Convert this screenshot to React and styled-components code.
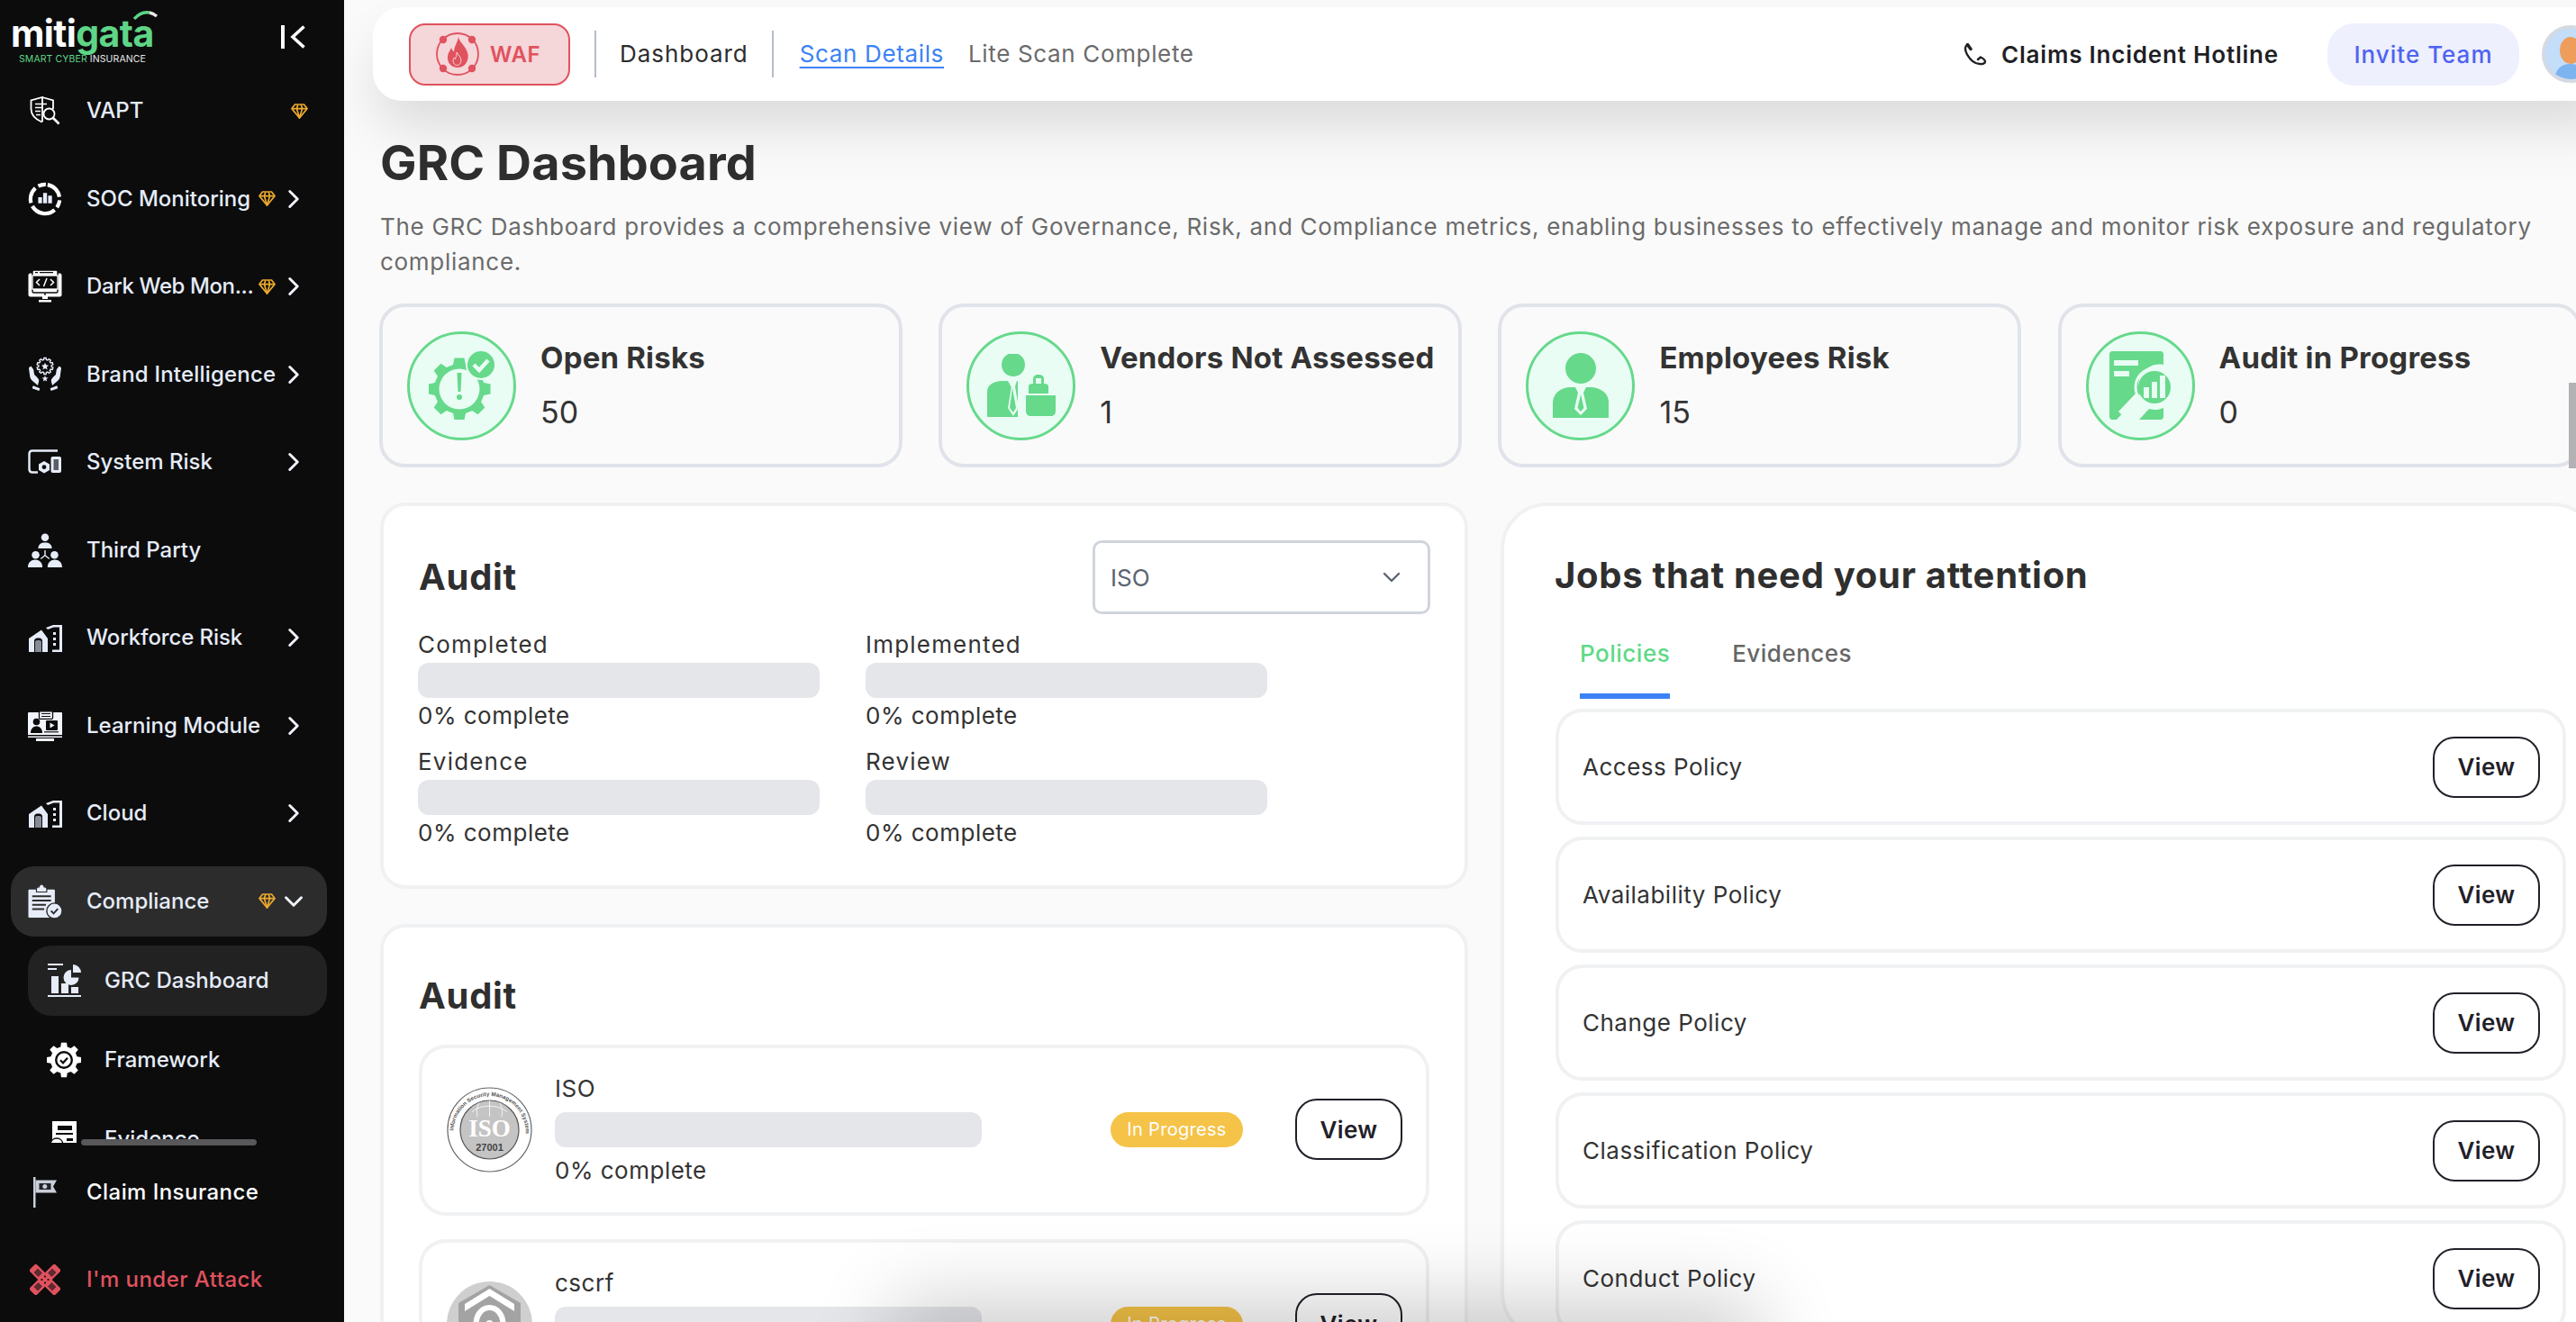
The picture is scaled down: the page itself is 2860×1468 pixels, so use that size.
import React from "react";
import styled, { createGlobalStyle } from "styled-components";
import { ChevronRight, ChevronDown } from "lucide-react";

const FF = `Inter, "Noto Sans", "Liberation Sans", sans-serif`;

const Global = createGlobalStyle`
  html, body { margin: 0; padding: 0; background: #fafafa; }
  body { font-family: ${FF}; overflow: hidden; }
  * { box-sizing: border-box; }
`;

const Shell = styled.div`
  display: flex;
  width: 2860px;
  height: 1468px;
  overflow: hidden;
  background: #fafafa;
`;

/* ---------- sidebar ---------- */
const Side = styled.aside`
  position: relative;
  width: 382px;
  flex: none;
  height: 100%;
  background: #0c0c0d;
  display: flex;
  flex-direction: column;
`;
const SideHead = styled.div`
  height: 84px;
  flex: none;
  display: flex;
  justify-content: space-between;
  align-items: flex-start;
  padding: 17px 43px 0 12px;
`;
const LogoBox = styled.div`
  position: relative;
  display: flex;
  flex-direction: column;
  width: 162px;
`;
const LogoWord = styled.div`
  font-size: 41px;
  line-height: 40px;
  font-weight: 700;
  letter-spacing: -0.6px;
  color: #fff;
  white-space: nowrap;
`;
const LogoGreen = styled.span`
  color: #5fd587;
`;
const LogoSub = styled.div`
  margin: 3px 0 0 9px;
  font-size: 10.5px;
  line-height: 12px;
  letter-spacing: 0.1px;
  color: #e8e8e8;
  white-space: nowrap;
`;
const LogoArc = styled.svg`
  position: absolute;
  left: 134px;
  top: -6px;
`;
const CollapseIcon = styled.svg`
  margin-top: 11px;
`;
const NavClip = styled.nav`
  height: 1185px;
  flex: none;
  overflow: hidden;
  display: flex;
  flex-direction: column;
  gap: 19.5px;
  padding: 0 19px 0 12px;
`;
const NavRow = styled.div`
  flex: none;
  height: 78px;
  display: flex;
  align-items: center;
  padding: 0 20px 0 19px;
  border-radius: 26px;
  background: ${(p) => (p.$open ? "#2c2c2d" : "transparent")};
`;
const SubList = styled.div`
  flex: none;
  display: flex;
  flex-direction: column;
  gap: 10px;
  margin: -9.5px 0 0 19px;
`;
const SubRow = styled.div`
  flex: none;
  height: 78px;
  display: flex;
  align-items: center;
  padding-left: 21px;
  border-radius: 26px;
  background: ${(p) => (p.$active ? "#222223" : "transparent")};
`;
const IconSlot = styled.span`
  flex: none;
  width: 38px;
  height: 40px;
  margin-right: ${(p) => p.$gap ?? 27}px;
  display: flex;
  align-items: center;
  justify-content: center;
`;
const NavLabel = styled.span`
  font-size: 24px;
  line-height: 36px;
  font-weight: 500;
  letter-spacing: ${(p) => p.$spacing ?? 0}px;
  white-space: nowrap;
  color: ${(p) => p.$color || "#e6ecf8"};
`;
const Trail = styled.span`
  margin-left: auto;
  display: flex;
  align-items: center;
  gap: ${(p) => p.$gap ?? 3}px;
  margin-right: ${(p) => p.$shift ?? 0}px;
  color: #f0f3fa;
`;
const BottomNav = styled.div`
  flex: none;
  display: flex;
  flex-direction: column;
  gap: 19px;
  padding: 16px 19px 0 12px;
`;
const Thumb = styled.div`
  position: absolute;
  left: 90px;
  top: 1265px;
  width: 195px;
  height: 7px;
  border-radius: 4px;
  background: #58585a;
`;

/* ---------- main ---------- */
const Main = styled.main`
  position: relative;
  flex: 1;
  min-width: 0;
  height: 100%;
  overflow: hidden;
`;
const Topbar = styled.header`
  position: relative;
  z-index: 1;
  height: 104px;
  margin: 8px -40px 0 32px;
  padding: 0 14px 0 40px;
  display: flex;
  align-items: center;
  background: #fff;
  border-radius: 32px 0 0 32px;
  box-shadow: 0 34px 60px -6px rgba(0, 0, 0, 0.13);
`;
const WafButton = styled.div`
  flex: none;
  width: 179px;
  height: 69px;
  display: flex;
  align-items: center;
  gap: 9px;
  padding-left: 25px;
  background: #f5d6d9;
  border: 2px solid #e0525e;
  border-radius: 18px;
  color: #e0525e;
  font-size: 24px;
  font-weight: 600;
  letter-spacing: 0.6px;
`;
const TopSep = styled.span`
  flex: none;
  width: 2px;
  height: 52px;
  background: #b6bcc8;
  margin: ${(p) => p.$m};
`;
const Crumb = styled.span`
  font-size: 26px;
  line-height: 36px;
  letter-spacing: ${(p) => p.$spacing ?? 0.65}px;
  white-space: nowrap;
  color: ${(p) => p.$color};
  text-decoration: ${(p) => (p.$link ? "underline" : "none")};
  text-underline-offset: 5px;
  margin-left: ${(p) => p.$ml || 0}px;
`;
const Hotline = styled.div`
  margin-left: auto;
  display: flex;
  align-items: center;
  gap: 16px;
  font-size: 26px;
  font-weight: 600;
  letter-spacing: 0.8px;
  color: #1f1f26;
  white-space: nowrap;
`;
const Invite = styled.div`
  flex: none;
  width: 213px;
  height: 69px;
  margin: 0 25px 0 54px;
  display: flex;
  align-items: center;
  justify-content: center;
  background: #eef0fd;
  border-radius: 30px;
  color: #4f63f0;
  font-size: 26px;
  font-weight: 500;
  letter-spacing: 1px;
`;
const Avatar = styled.div`
  flex: none;
  width: 64px;
  height: 64px;
  border-radius: 50%;
  border: 4px solid #d5dae2;
  background: #b8d6f7;
  overflow: hidden;
`;
const Content = styled.div`
  padding: 39px 0 0 40px;
`;
const PageTitle = styled.h1`
  margin: 0;
  font-size: 54px;
  line-height: 60px;
  font-weight: 700;
  letter-spacing: 0.1px;
  color: #2f2f2f;
`;
const PageDesc = styled.p`
  margin: 21px 0 0;
  width: 2410px;
  font-size: 26px;
  line-height: 39px;
  letter-spacing: 0.71px;
  color: #6b6b6b;
`;
const StatGrid = styled.div`
  display: grid;
  grid-template-columns: repeat(4, 581px);
  gap: 40.2px;
  margin: 27px 0 0 -1px;
`;
const StatCard = styled.div`
  height: 182px;
  display: flex;
  align-items: center;
  gap: 27px;
  padding: 0 27px;
  border: 4px solid #e0e3e9;
  border-radius: 28px;
  background: #fafafa;
`;
const StatCircle = styled.span`
  flex: none;
  width: 121px;
  height: 121px;
  border-radius: 50%;
  border: 3px solid #66d98b;
  background: #e9fdf4;
  display: flex;
  align-items: center;
  justify-content: center;
`;
const StatText = styled.div`
  display: flex;
  flex-direction: column;
  gap: 17px;
  padding-bottom: 2px;
`;
const StatTitle = styled.div`
  font-size: 33px;
  line-height: 44px;
  font-weight: 700;
  letter-spacing: 0.2px;
  color: #333;
  white-space: nowrap;
`;
const StatValue = styled.div`
  font-size: 34px;
  line-height: 44px;
  color: #333;
`;
const Columns = styled.div`
  display: grid;
  grid-template-columns: 1208px 1220px;
  gap: 36px;
  margin-top: 39px;
  align-items: start;
`;
const LeftCol = styled.div`
  display: flex;
  flex-direction: column;
  gap: 39px;
`;
const Panel = styled.section`
  border: 4px solid #f0f1f3;
  border-radius: ${(p) => p.$radius || 28}px;
  background: #fff;
  padding: ${(p) => p.$pad};
`;
const PanelHead = styled.div`
  display: flex;
  justify-content: space-between;
  align-items: center;
  height: 82px;
`;
const PanelTitle = styled.h2`
  margin: ${(p) => p.$m || "0"};
  font-size: 40px;
  line-height: 74px;
  font-weight: 700;
  letter-spacing: 0.7px;
  color: #2f2f2f;
  white-space: nowrap;
`;
const SelectBox = styled.div`
  width: 375px;
  height: 82px;
  display: flex;
  align-items: center;
  justify-content: space-between;
  padding: 0 24px 0 17px;
  border: 3px solid #d0d5dc;
  border-radius: 10px;
  font-size: 26px;
  color: #5b6472;
`;
const ProgressGrid = styled.div`
  display: grid;
  grid-template-columns: repeat(2, 446px);
  gap: 15px 51px;
  margin-top: 16px;
`;
const ProgressCell = styled.div`
  display: flex;
  flex-direction: column;
  gap: 2px;
`;
const BodyText = styled.div`
  font-size: 26px;
  line-height: 36px;
  letter-spacing: 0.5px;
  color: #333;
  white-space: nowrap;
`;
const ProgressLabel = styled(BodyText)`
  letter-spacing: 1.2px;
`;
const Bar = styled.div`
  height: 39px;
  border-radius: 12px;
  background: #e5e6ea;
`;
const AuditList = styled.div`
  display: flex;
  flex-direction: column;
  gap: 26px;
  margin-top: 17px;
`;
const AuditRow = styled.div`
  height: 190px;
  flex: none;
  display: flex;
  align-items: center;
  padding: 0 26px 2px 27px;
  border: 4px solid #f0f1f3;
  border-radius: 30px;
`;
const AuditLogo = styled.svg`
  flex: none;
  margin-right: 25px;
`;
const AuditBody = styled.div`
  width: 474px;
  display: flex;
  flex-direction: column;
  gap: 8px;
`;
const Badge = styled.span`
  flex: none;
  width: 147px;
  height: 39px;
  margin: 0 58px 0 auto;
  display: flex;
  align-items: center;
  justify-content: center;
  border-radius: 20px;
  background: #f5c347;
  color: #fff;
  font-size: 20px;
  letter-spacing: 0.3px;
`;
const ViewBtn = styled.button`
  flex: none;
  width: 119px;
  height: 68px;
  padding: 0;
  border: 2.5px solid #1f2028;
  border-radius: 24px;
  background: #fff;
  color: #1f2028;
  font-family: ${FF};
  font-size: 26px;
  font-weight: 600;
  letter-spacing: 0.4px;
`;
const Tabs = styled.div`
  display: flex;
  gap: 69px;
  margin: 32px 0 0 27px;
`;
const Tab = styled.div`
  padding-bottom: 26px;
  border-bottom: 6px solid ${(p) => (p.$active ? "#3b82f6" : "transparent")};
  font-size: 26px;
  line-height: 36px;
  font-weight: 500;
  letter-spacing: 0.5px;
  color: ${(p) => (p.$active ? "#5fd987" : "#666")};
`;
const PolicyList = styled.div`
  display: flex;
  flex-direction: column;
  gap: 13px;
  margin-top: 11px;
  width: 1122px;
`;
const PolicyRow = styled.div`
  height: 129px;
  flex: none;
  display: flex;
  align-items: center;
  justify-content: space-between;
  padding: 0 25px 0 26px;
  border: 4px solid #f0f1f3;
  border-radius: 30px;
`;
const PageThumb = styled.div`
  position: absolute;
  right: 0;
  top: 425px;
  width: 8px;
  height: 95px;
  background: #b3b1b4;
  z-index: 2;
`;
const BottomGlow = styled.div`
  position: absolute;
  left: 640px;
  top: 1476px;
  width: 900px;
  height: 60px;
  z-index: 3;
  box-shadow: 0 0 90px 30px rgba(0, 0, 0, 0.2);
`;

/* ---------- drawings ---------- */
const gear = (cx, cy, ro, ri, n) => {
  const pts = [];
  const step = (Math.PI * 2) / n;
  for (let i = 0; i < n; i++) {
    const a = i * step;
    const w = step * 0.2;
    const g = step * 0.32;
    [
      [ri, a - g],
      [ro, a - w],
      [ro, a + w],
      [ri, a + g],
    ].forEach(([r, t]) =>
      pts.push(`${(cx + r * Math.sin(t)).toFixed(2)} ${(cy - r * Math.cos(t)).toFixed(2)}`)
    );
  }
  return `M${pts.join("L")}Z`;
};

const Gem = () => (
  <svg width="19" height="17" viewBox="0 0 19 17" fill="none" stroke="#eba92f" strokeWidth="1.7" strokeLinejoin="round">
    <path d="M4.5 1h10L18 5.6 9.5 16 1 5.6z" />
    <path d="M1 5.6h17M6.4 5.6 9.5 16l3.1-10.4M6.4 5.6l1.4-4.4M12.6 5.6l-1.4-4.4" />
  </svg>
);

const IconVapt = () => (
  <svg width="34" height="32" viewBox="0 0 34 32" fill="none" stroke="#fff" strokeWidth="1.8">
    <path d="M14 1 26 4.5V14M14 27.5l-1 .7C6 25 1.5 20.5 1.5 14V4.5L14 1z" />
    <path d="M6 8.5h13M6 12.5h9M6 16.5h6M7 20.5h5" strokeWidth="1.6" />
    <circle cx="21.5" cy="19.5" r="6" />
    <path d="M26 24l6.5 6.5" strokeWidth="2.6" />
  </svg>
);
const IconSoc = () => (
  <svg width="40" height="40" viewBox="0 0 40 40" fill="none">
    <circle cx="20" cy="20" r="17" stroke="#fff" strokeWidth="4.4" strokeDasharray="21 4 9 4 30 4 19 4 9 4" strokeLinecap="butt" transform="rotate(-80 20 20)" />
    <path d="M12 18h4.5v7H12zM17.8 13h4.5v12h-4.5zM23.6 16h4.5v9h-4.5z" fill="#e6ecf8" />
  </svg>
);
const IconDark = () => (
  <svg width="38" height="38" viewBox="0 0 38 38" fill="none">
    <rect x="0.5" y="4.5" width="37" height="26" rx="2" fill="#fff" />
    <rect x="5" y="1" width="28" height="25" rx="1.5" fill="#fff" stroke="#0c0c0d" strokeWidth="1.4" />
    <rect x="5" y="7" width="28" height="15" fill="#0c0c0d" stroke="#fff" strokeWidth="1.3" />
    <path d="M8 3.6h3M13 3.6h15" stroke="#0c0c0d" strokeWidth="1.1" />
    <path d="M13 11l-3.5 3.5 3.5 3.5M25 11l3.5 3.5L25 18M21 10l-3.5 9" stroke="#fff" strokeWidth="1.5" />
    <path d="M16 30h6v3h-6zM12 34h14v2.5H12z" fill="#fff" />
    <circle cx="19" cy="27.8" r="1" fill="#0c0c0d" />
  </svg>
);
const IconBrand = () => (
  <svg width="40" height="40" viewBox="0 0 40 40" fill="none">
    <path d={gear(20, 10, 9.5, 7.6, 10)} stroke="#e6ecf8" strokeWidth="1.5" />
    <path d="M20 6l1.3 2.7 3 .4-2.2 2 .6 3-2.7-1.5-2.7 1.5.6-3-2.2-2 3-.4z" fill="#e6ecf8" />
    <path d="M1 12l1.5 11c.5 3 3.5 5 6 7l3 2.5 1-3.5c1-2 0-4-2-6l-3-3-1-6-3-4zM39 12l-1.5 11c-.5 3-3.5 5-6 7l-3 2.5-1-3.5c-1-2 0-4 2-6l3-3 1-6 3-4z" fill="#e6ecf8" />
    <path d="M6 33l8 3-1 3-8-3zM34 33l-8 3 1 3 8-3z" fill="#e6ecf8" />
    <path d="M20 21l1 2.5 2.7.1-2.1 1.7.7 2.6-2.3-1.4-2.3 1.4.7-2.6-2.1-1.7 2.7-.1z" fill="#e6ecf8" />
  </svg>
);
const IconSystem = () => (
  <svg width="38" height="28" viewBox="0 0 38 28" fill="none">
    <path d="M33 1.5H5C3 1.5 1.5 3 1.5 5v17c0 2 1.5 3.500 3.500 3.500h6" stroke="#e6ecf8" strokeWidth="2.4" />
    <path d="M18 13l6 3.400v6.500L18 26.400l-6-3.500v-6.500z" fill="#e6ecf8" />
    <circle cx="18" cy="19.700" r="2.400" fill="#0c0c0d" />
    <rect x="25.500" y="8" width="11.500" height="18" rx="2" fill="#e6ecf8" />
    <rect x="28.500" y="11" width="5.500" height="12" fill="#5b5e66" />
  </svg>
);
const IconThird = () => (
  <svg width="40" height="40" viewBox="0 0 40 40" fill="#e6ecf8">
    <circle cx="20" cy="5" r="4.500" />
    <path d="M12 18c0-5 3.500-7 8-7s8 2 8 7z" />
    <circle cx="9" cy="25.500" r="4.500" />
    <circle cx="31" cy="25.500" r="4.500" />
    <path d="M0 40c0-6 4-9 8.500-9s8.500 3 8.500 9zM23 40c0-6 4-9 8.500-9S40 34 40 40z" />
    <path d="M20 20v6M20 26l-5 4M20 26l5 4" stroke="#e6ecf8" strokeWidth="1.500" fill="none" />
  </svg>
);
const IconBuilding = () => (
  <svg width="38" height="31" viewBox="0 0 38 31" fill="none">
    <path d="M15 6.500 1 16v15h21V16z" fill="#e6ecf8" />
    <path d="M7 31V18.500c0-1.500 1.500-3 3.500-3h2c2 0 3.500 1.500 3.500 3V31z" fill="#0c0c0d" />
    <path d="M8 31V20c0-1.500 1-2 3-2h1c2 0 3 .5 3 2v11z" fill="#868b95" />
    <path d="M20 4 28 1h10v30H27v-2.500h8V3.500h-6.500L22 6z" fill="#e6ecf8" />
    <path d="M28 9h3v3h-3zM28 15h3v3h-3zM28 21h3v3h-3z" fill="#e6ecf8" />
  </svg>
);
const IconLearn = () => (
  <svg width="38" height="34" viewBox="0 0 38 34" fill="none">
    <path d="M1 2h36c.5 0 1 .5 1 1v24H0V3c0-.5.5-1 1-1z" fill="#f2f5fb" />
    <path d="M0 28.500h38v1.500H0zM9 31h20v3H9z" fill="#f2f5fb" />
    <rect x="12.500" y="0.800" width="15" height="8.500" rx="1" fill="#f2f5fb" stroke="#0c0c0d" strokeWidth="1.300" />
    <path d="M15 3.500h10M15 6.500h10" stroke="#0c0c0d" strokeWidth="1.200" />
    <circle cx="9.500" cy="12.500" r="3.800" fill="#0c0c0d" />
    <path d="M3 25c0-5 3-7.500 6.500-7.500S16 20 16 25z" fill="#0c0c0d" />
    <rect x="20" y="11" width="13" height="11" rx="1" fill="#0c0c0d" />
    <path d="M24.500 13.500v6l5-3z" fill="#f2f5fb" />
    <path d="M18 23.800h16" stroke="#0c0c0d" strokeWidth="1.200" />
  </svg>
);
const IconCompliance = () => (
  <svg width="40" height="40" viewBox="0 0 40 40" fill="none">
    <path d="M2 6h28c1 0 1.500.5 1.500 1.500V39H2C1 39 .5 38.500 .5 37.500V7.500C.5 6.500 1 6 2 6z" fill="#e6ecf8" />
    <path d="M10 5c0-1.500 1.500-2 3-2 .5-2 2-3 3-3s2.500 1 3 3c1.500 0 3 .5 3 2v4H10z" fill="#e6ecf8" stroke="#2c2c2d" strokeWidth="1.200" />
    <path d="M5 14h22M5 19h22M5 24h16M5 29h14" stroke="#2c2c2d" strokeWidth="2" />
    <circle cx="31" cy="31" r="9" fill="#e6ecf8" stroke="#2c2c2d" strokeWidth="1.500" />
    <path d="M27 31l3 3 5-5.500" stroke="#2c2c2d" strokeWidth="2" />
  </svg>
);
const IconGrc = () => (
  <svg width="37" height="37" viewBox="0 0 37 37" fill="none">
    <path d="M0 1h17M0 6h10M0 36h37" stroke="#e6ecf8" strokeWidth="2.200" />
    <path d="M4 14h8v19H4zM15 22h8v11h-8zM26 26h8v7h-8z" fill="#e6ecf8" />
    <path d="M26 7a8.500 8.500 0 1 0 8.500 8.500H26z" fill="#e6ecf8" />
    <path d="M28 1a9 9 0 0 1 9 9h-9z" fill="#e6ecf8" />
  </svg>
);
const IconFramework = () => (
  <svg width="38" height="40" viewBox="0 0 38 40" fill="none">
    <path d={gear(19, 20, 19.500, 15, 8)} fill="#fff" />
    <circle cx="19" cy="20" r="13" fill="#fff" />
    <circle cx="19" cy="20" r="8.800" stroke="#0c0c0d" strokeWidth="2.400" />
    <path d="M15 20.300l3 3 5-5.500" stroke="#0c0c0d" strokeWidth="2.200" />
  </svg>
);
const IconEvidence = () => (
  <svg width="30" height="40" viewBox="0 0 30 40" fill="none">
    <path d="M2 0h27v40H2z" fill="#fff" />
    <rect x="8" y="5" width="16" height="5" fill="#0c0c0d" />
    <path d="M6 14h19" stroke="#0c0c0d" strokeWidth="2" />
    <path d="M0 27c0-5 3-8 7-8s7 3 7 8v13H0z" fill="#fff" stroke="#0c0c0d" strokeWidth="1.400" />
    <path d="M18 19h7v3h-7zM18 24h7v16h-7z" fill="#0c0c0d" />
  </svg>
);
const IconClaim = () => (
  <svg width="28" height="34" viewBox="0 0 28 34" fill="none">
    <path d="M1 0h2.500v34H1z" fill="#c9ceda" />
    <path d="M3.500 3.500H27l-4 7 4 7H3.500z" fill="#c9ceda" />
    <rect x="7.500" y="7" width="13" height="7" fill="#232326" />
    <circle cx="13.800" cy="10.500" r="2.500" fill="#c9ceda" />
  </svg>
);
const IconAttack = () => (
  <svg width="34" height="34" viewBox="0 0 34 34" fill="none">
    <rect x="-3" y="11.500" width="40" height="11" rx="2.500" fill="#e0525e" transform="rotate(45 17 17)" />
    <rect x="-3" y="11.500" width="40" height="11" rx="2.500" fill="#e0525e" transform="rotate(-45 17 17)" />
    <path d="M9 4.500l5 5-4.500 4.500-5-5zM29.500 9l-5 5-4.500-4.500 5-5zM4.500 25l5-5 4.500 4.500-5 5zM25 29.500l-5-5 4.500-4.500 5 5z" fill="#5d2a30" />
    <g fill="#0c0c0d">
      <circle cx="17" cy="13.500" r="1.100" />
      <circle cx="13.500" cy="17" r="1.100" />
      <circle cx="20.500" cy="17" r="1.100" />
      <circle cx="17" cy="20.500" r="1.100" />
    </g>
  </svg>
);
const IconWaf = () => (
  <svg width="54" height="54" viewBox="0 0 54 54" fill="none">
    <circle cx="27" cy="27" r="23" stroke="#e0525e" strokeWidth="1.800" />
    <g fill="#e0525e">
      <circle cx="11" cy="11" r="4.200" />
      <circle cx="43" cy="11" r="4.200" />
      <circle cx="11" cy="43" r="4.200" />
      <circle cx="43" cy="43" r="4.200" />
      <path d="M28 8c1 6 9 11 10.500 19 1.200 7-3 15-11.500 15-7.500 0-11.500-6-11-12 .4-4.500 2.500-6 4-10 1 2 1.500 3.500 3 4.500C23 19 27 14 28 8z" />
    </g>
    <path d="M26 25c1.500 3 5 5 5 9.500 0 2.500-2 5-4.500 5s-4.500-2.200-4.500-5c0-1.500.7-2.500 1.300-3.500l1 1.500c.8-2 2-4 1.700-7.500z" stroke="#f5d6d9" strokeWidth="1" />
  </svg>
);
const IconPhone = () => (
  <svg width="26" height="25" viewBox="0 0 26 25" fill="none" stroke="#1f1f26" strokeWidth="2.400" strokeLinecap="round" strokeLinejoin="round">
    <path d="M4.500 1.500C1.500 3 1 7 4 12.500 8 19.500 13 23 18 23c3 .5 6-.5 6-2.500 0-2-3-4-5-5l-3 2.500" />
    <path d="M4.500 1.500 8 6.500" strokeWidth="3.400" />
  </svg>
);
const IconCollapse = () => (
  <CollapseIcon width="27" height="26" viewBox="0 0 27 26" fill="none" stroke="#fff">
    <path d="M2 0v26" strokeWidth="4" />
    <path d="M25.500 1.500 13 13l12.500 11.500" strokeWidth="3.600" />
  </CollapseIcon>
);
const StatRisk = () => (
  <svg width="74" height="76" viewBox="0 0 74 76" fill="none">
    <path d={gear(34, 42, 35, 28, 8)} fill="#66d98b" />
    <circle cx="34" cy="42" r="22.500" fill="#e9fdf4" />
    <path d="M31.500 24h5l-1 21h-3z" fill="#66d98b" />
    <circle cx="34" cy="51" r="3" fill="#66d98b" />
    <circle cx="58" cy="15" r="16" fill="#66d98b" stroke="#e9fdf4" strokeWidth="2" />
    <path d="M50 15l6 6 10-11" stroke="#e9fdf4" strokeWidth="4.500" />
  </svg>
);
const StatVendor = () => (
  <svg width="78" height="70" viewBox="0 0 78 70" fill="#66d98b">
    <ellipse cx="30" cy="12" rx="13" ry="13" />
    <path d="M1 70V42c0-8 8-12 17-12h6l5 9 1-9h5v40z" />
    <path d="M26 30h8l-2 6 4 24-6 9-6-9 4-24z" fill="#e9fdf4" />
    <path d="M29 38l-3 22 4 5 3-5z" fill="#66d98b" />
    <path d="M47 36c0-2 2-3 5-3v-5c0-3 2-5 6-5s6 2 6 5v5c3 0 5 1 5 3v8H47z" />
    <rect x="55" y="27" width="6" height="6" fill="#e9fdf4" />
    <path d="M44 46h33v17c0 4-2 6-6 6H50c-4 0-6-2-6-6z" />
  </svg>
);
const StatEmployee = () => (
  <svg width="66" height="72" viewBox="0 0 66 72" fill="#66d98b">
    <circle cx="33" cy="17" r="17" />
    <path d="M2 72V55c0-10 9-17 20-17h22c11 0 20 7 20 17v17z" />
    <path d="M27 38h12l-3 6 4 18-7 7-7-7 4-18z" fill="#e9fdf4" />
    <path d="M33 46l-3.500 15 3.500 4 3.500-4z" fill="#66d98b" />
  </svg>
);
const StatAudit = () => (
  <svg width="68" height="76" viewBox="0 0 68 76" fill="none">
    <path d="M3 0h54c1.500 0 3 1.500 3 3v12C45 12 32 24 32 38c0 4 1 7 2 9L8 76H3c-1.500 0-3-1.500-3-3V3C0 1.500 1.500 0 3 0z" fill="#66d98b" />
    <path d="M5 10h27v6H5zM5 22h17v6H5z" fill="#e9fdf4" />
    <path d="M33 76l11-12c6 2 11 1 16-1v10c0 1.500-1.500 3-3 3z" fill="#66d98b" />
    <circle cx="50" cy="40" r="18" fill="#66d98b" />
    <circle cx="50" cy="40" r="21" stroke="#e9fdf4" strokeWidth="3" />
    <path d="M37 55 18 75l-8-8 19-20" fill="#e9fdf4" />
    <path d="M38 40h6v12h-6zM47 34h6v18h-6zM56 27h6v25h-6z" fill="#e9fdf4" />
  </svg>
);
const IsoLogo = () => (
  <AuditLogo width="95" height="95" viewBox="0 0 95 95" fill="none">
    <circle cx="47.500" cy="47.500" r="46.500" stroke="#666" strokeWidth="1.200" fill="#fff" />
    <defs>
      <path id="isoArc" d="M7.500 50a40 40 0 1 1 80 0" />
    </defs>
    <text fontSize="6.300" fontFamily="Liberation Sans, sans-serif" fontWeight="700" fill="#555">
      <textPath href="#isoArc" startOffset="1%">Information Security Management System</textPath>
    </text>
    <circle cx="47.500" cy="47.500" r="32.500" fill="#c4c4c4" stroke="#555" strokeWidth="1.200" />
    <path d="M28 28c8-9 30-9 39 0M47.500 15v18M36 18c-3 5-3 10-2 15M59 18c3 5 3 10 2 15" stroke="#fff" strokeWidth=".8" />
    <text x="47.500" y="55" textAnchor="middle" fontSize="27" fontWeight="700" fontFamily="Liberation Serif, serif" fill="#fff">ISO</text>
    <text x="47.500" y="71" textAnchor="middle" fontSize="11" fontWeight="700" fontFamily="Liberation Sans, sans-serif" fill="#444">27001</text>
  </AuditLogo>
);
const CscrfLogo = () => (
  <AuditLogo width="95" height="95" viewBox="0 0 95 95" fill="none">
    <circle cx="47.500" cy="47.500" r="47.500" fill="#cfcfcf" />
    <path d="M47.500 4 82 24v46L47.500 90 13 70V24z" fill="#a3a3a3" />
    <path d="M47.500 8 20 25v8L47.500 16 75 33v-8z" fill="#fff" />
    <ellipse cx="47.500" cy="47" rx="15" ry="18" stroke="#fff" strokeWidth="6" />
    <circle cx="47.500" cy="47" r="4" fill="#fff" />
  </AuditLogo>
);

/* ---------- data ---------- */
const nav = [
  { label: "VAPT", icon: <IconVapt />, gem: true, chevron: false },
  { label: "SOC Monitoring", icon: <IconSoc />, gem: true, chevron: true },
  { label: "Dark Web Mon...", icon: <IconDark />, gem: true, chevron: true, spacing: -0.4 },
  { label: "Brand Intelligence", icon: <IconBrand />, chevron: true, spacing: 0.2 },
  { label: "System Risk", icon: <IconSystem />, chevron: true },
  { label: "Third Party", icon: <IconThird /> },
  { label: "Workforce Risk", icon: <IconBuilding />, chevron: true, spacing: -0.1 },
  { label: "Learning Module", icon: <IconLearn />, chevron: true },
  { label: "Cloud", icon: <IconBuilding />, chevron: true },
];
const stats = [
  { title: "Open Risks", value: "50", icon: <StatRisk /> },
  { title: "Vendors Not Assessed", value: "1", icon: <StatVendor /> },
  { title: "Employees Risk", value: "15", icon: <StatEmployee /> },
  { title: "Audit in Progress", value: "0", icon: <StatAudit /> },
];
const progress = ["Completed", "Implemented", "Evidence", "Review"];
const audits = [
  { name: "ISO", logo: <IsoLogo /> },
  { name: "cscrf", logo: <CscrfLogo /> },
];
const policies = [
  "Access Policy",
  "Availability Policy",
  "Change Policy",
  "Classification Policy",
  "Conduct Policy",
];

export default function App() {
  return (
    <Shell>
      <Global />
      <Side>
        <SideHead>
          <LogoBox>
            <LogoWord>
              miti<LogoGreen>gata</LogoGreen>
            </LogoWord>
            <LogoSub>
              <LogoGreen>SMART CYBER</LogoGreen> INSURANCE
            </LogoSub>
            <LogoArc width="30" height="14" viewBox="0 0 30 14" fill="none" strokeWidth="3.400">
              <path d="M3 10C9 3 15 2 20 3" stroke="#5fd587" />
              <path d="M20 3c3 .6 5.500 2 8 4" stroke="#e8e8e8" />
            </LogoArc>
          </LogoBox>
          <IconCollapse />
        </SideHead>
        <NavClip>
          {nav.map((n) => (
            <NavRow key={n.label}>
              <IconSlot>{n.icon}</IconSlot>
              <NavLabel $spacing={n.spacing}>{n.label}</NavLabel>
              {(n.gem || n.chevron) && (
                <Trail $shift={n.chevron ? 0 : 1}>
                  {n.gem && <Gem />}
                  {n.chevron && <ChevronRight size={34} strokeWidth={2.1} />}
                </Trail>
              )}
            </NavRow>
          ))}
          <NavRow $open>
            <IconSlot><IconCompliance /></IconSlot>
            <NavLabel>Compliance</NavLabel>
            <Trail>
              <Gem />
              <ChevronDown size={34} strokeWidth={2.1} />
            </Trail>
          </NavRow>
          <SubList>
            <SubRow $active>
              <IconSlot $gap={26}><IconGrc /></IconSlot>
              <NavLabel>GRC Dashboard</NavLabel>
            </SubRow>
            <SubRow>
              <IconSlot $gap={26}><IconFramework /></IconSlot>
              <NavLabel>Framework</NavLabel>
            </SubRow>
            <SubRow>
              <IconSlot $gap={26}><IconEvidence /></IconSlot>
              <NavLabel>Evidence</NavLabel>
            </SubRow>
          </SubList>
        </NavClip>
        <BottomNav>
          <NavRow>
            <IconSlot><IconClaim /></IconSlot>
            <NavLabel $color="#fff" $spacing={0.45}>Claim Insurance</NavLabel>
          </NavRow>
          <NavRow>
            <IconSlot><IconAttack /></IconSlot>
            <NavLabel $color="#e0525e" $spacing={0.45}>I'm under Attack</NavLabel>
          </NavRow>
        </BottomNav>
        <Thumb />
      </Side>
      <Main>
        <Topbar>
          <WafButton>
            <IconWaf />
            WAF
          </WafButton>
          <TopSep $m="0 26px 0 27px" />
          <Crumb $color="#2d2d2d" $spacing={0.95}>Dashboard</Crumb>
          <TopSep $m="0 29px 0 26px" />
          <Crumb $color="#3b82f6" $link>Scan Details</Crumb>
          <Crumb $color="#6b6b6b" $ml={27}>Lite Scan Complete</Crumb>
          <Hotline>
            <IconPhone />
            Claims Incident Hotline
          </Hotline>
          <Invite>Invite Team</Invite>
          <Avatar>
            <svg width="56" height="56" viewBox="0 0 56 56">
              <rect x="0" y="0" width="56" height="56" fill="#c4ddf9" />
              <ellipse cx="28" cy="24" rx="12" ry="15" fill="#ee9d5b" />
              <path d="M10 56c2-14 10-17 18-17s16 3 18 17z" fill="#7db4ef" />
            </svg>
          </Avatar>
        </Topbar>
        <Content>
          <PageTitle>GRC Dashboard</PageTitle>
          <PageDesc>
            The GRC Dashboard provides a comprehensive view of Governance, Risk, and Compliance metrics, enabling businesses to effectively manage and monitor risk exposure and regulatory compliance.
          </PageDesc>
          <StatGrid>
            {stats.map((s) => (
              <StatCard key={s.title}>
                <StatCircle>{s.icon}</StatCircle>
                <StatText>
                  <StatTitle>{s.title}</StatTitle>
                  <StatValue>{s.value}</StatValue>
                </StatText>
              </StatCard>
            ))}
          </StatGrid>
          <Columns>
            <LeftCol>
              <Panel $pad="38px 38px 40px 38px">
                <PanelHead>
                  <PanelTitle $m="0 0 0 1px">Audit</PanelTitle>
                  <SelectBox>
                    ISO
                    <ChevronDown size={32} strokeWidth={1.8} color="#5b6472" />
                  </SelectBox>
                </PanelHead>
                <ProgressGrid>
                  {progress.map((p) => (
                    <ProgressCell key={p}>
                      <ProgressLabel>{p}</ProgressLabel>
                      <Bar />
                      <BodyText>0% complete</BodyText>
                    </ProgressCell>
                  ))}
                </ProgressGrid>
              </Panel>
              <Panel $pad="39px 39px 41px">
                <PanelTitle>Audit</PanelTitle>
                <AuditList>
                  {audits.map((a) => (
                    <AuditRow key={a.name}>
                      {a.logo}
                      <AuditBody>
                        <BodyText>{a.name}</BodyText>
                        <Bar />
                        <BodyText>0% complete</BodyText>
                      </AuditBody>
                      <Badge>In Progress</Badge>
                      <ViewBtn>View</ViewBtn>
                    </AuditRow>
                  ))}
                </AuditList>
              </Panel>
            </LeftCol>
            <Panel $radius={52} $pad="40px 0 0 57px">
              <PanelTitle $m="0 0 0 -1px">Jobs that need your attention</PanelTitle>
              <Tabs>
                <Tab $active>Policies</Tab>
                <Tab>Evidences</Tab>
              </Tabs>
              <PolicyList>
                {policies.map((p) => (
                  <PolicyRow key={p}>
                    <BodyText>{p}</BodyText>
                    <ViewBtn>View</ViewBtn>
                  </PolicyRow>
                ))}
              </PolicyList>
            </Panel>
          </Columns>
        </Content>
        <PageThumb />
        <BottomGlow />
      </Main>
    </Shell>
  );
}
